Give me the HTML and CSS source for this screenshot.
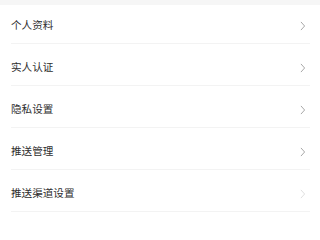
FILE: index.html
```html
<!DOCTYPE html>
<html lang="zh">
<head>
<meta charset="utf-8">
<link rel="stylesheet" href="styles.css">
</head>
<body>
<div class="strip"></div>
<ul class="list">
  <li class="row first"><span class="label">个人资料</span><svg class="chev" viewBox="0 0 6 10" width="6" height="10"><path d="M1.2 1.2 L4.6 5 L1.2 8.8"/></svg></li>
  <li class="row"><span class="label">实人认证</span><svg class="chev" viewBox="0 0 6 10" width="6" height="10"><path d="M1.2 1.2 L4.6 5 L1.2 8.8"/></svg></li>
  <li class="row"><span class="label">隐私设置</span><svg class="chev" viewBox="0 0 6 10" width="6" height="10"><path d="M1.2 1.2 L4.6 5 L1.2 8.8"/></svg></li>
  <li class="row"><span class="label">推送管理</span><svg class="chev" viewBox="0 0 6 10" width="6" height="10"><path d="M1.2 1.2 L4.6 5 L1.2 8.8"/></svg></li>
  <li class="row"><span class="label">推送渠道设置</span><svg class="chev faded" viewBox="0 0 6 10" width="6" height="10"><path d="M1.2 1.2 L4.6 5 L1.2 8.8"/></svg></li>
</ul>
</body>
</html>
```
FILE: styles.css
```css
html, body {
  margin: 0;
  padding: 0;
  background: #ffffff;
  width: 320px;
  height: 213px;
  overflow: hidden;
  font-family: "Noto Sans CJK SC", "Noto Sans", sans-serif;
}
.strip {
  height: 5px;
  background: #f6f6f6;
}
.list {
  list-style: none;
  margin: 0;
  padding: 0;
}
.row {
  display: flex;
  align-items: center;
  justify-content: space-between;
  height: 16px;
  padding: 15px 4px 10px 0;
  margin-left: 11px;
  margin-right: 10px;
  border-bottom: 1px solid #f3f3f3;
}
.row.first {
  padding-top: 12px;
}
.label {
  font-size: 10.6px;
  line-height: 16px;
  color: #2e2e2e;
}
.chev {
  display: block;
  margin-top: 1px;
}
.chev path {
  fill: none;
  stroke: #a8a8a8;
  stroke-width: 1;
  stroke-linecap: round;
  stroke-linejoin: round;
}
.chev.faded {
  opacity: 0.35;
}
```
